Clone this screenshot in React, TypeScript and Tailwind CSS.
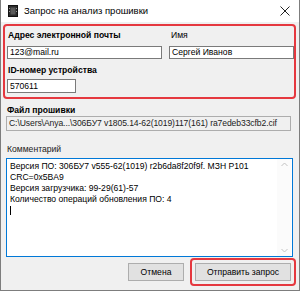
import React from 'react';

const lines = [
  'Версия ПО: 306БУ7 v555-62(1019) r2b6da8f20f9f. МЗН P101',
  'CRC=0x5BA9',
  'Версия загрузчика: 99-29(61)-57',
  'Количество операций обновления ПО: 4',
];

function TitleIcon() {
  return (
    <svg width="10" height="12" viewBox="0 0 10 12" className="shrink-0">
      <rect x="0.5" y="0.5" width="9" height="11" fill="#2b2b2b" stroke="#111" />
      <rect x="2.5" y="2.5" width="5" height="7" fill="#5a5a5a" />
      <rect x="1" y="3" width="1" height="1" fill="#9a9a9a" />
      <rect x="1" y="6" width="1" height="1" fill="#9a9a9a" />
      <rect x="8" y="3" width="1" height="1" fill="#9a9a9a" />
      <rect x="8" y="6" width="1" height="1" fill="#9a9a9a" />
    </svg>
  );
}

function Field({ value, className }: { value: string; className: string }) {
  return (
    <div className={`h-[13px] bg-white border border-[#7a7a7a] pl-[2px] leading-[11px] whitespace-nowrap overflow-hidden ${className}`}>
      {value}
    </div>
  );
}

export default function App() {
  return (
    <div className="w-[300px] h-[291px] bg-[#f0f0f0] border-x border-b border-[#7d7d7d] flex flex-col text-[8.6px] text-black font-['Segoe_UI','Liberation_Sans',sans-serif] overflow-hidden">
      {/* title bar */}
      <div className="h-[22px] bg-white flex items-center pl-[7px] pr-[9px] shrink-0">
        <TitleIcon />
        <span className="ml-[6px] text-[9.5px] flex-1">Запрос на анализ прошивки</span>
        <svg width="10" height="10" viewBox="0 0 10 10">
          <path d="M0.5 0.5 L9.5 9.5 M9.5 0.5 L0.5 9.5" stroke="#222" strokeWidth="1" />
        </svg>
      </div>

      {/* highlighted group */}
      <div className="mt-[2px] ml-[2px] mr-[3px] border-2 border-[#e5383f] rounded-[4px] pl-[2px] pr-[1px] pt-[4px] pb-[4px] flex gap-[7px]">
        <div className="flex flex-col w-[155px]">
          <div className="font-bold leading-[11px] pl-[1px]">Адрес электронной почты</div>
          <Field value="123@mail.ru" className="mt-[5px] w-[155px]" />
          <div className="font-bold leading-[11px] pl-[1px] mt-[6px]">ID-номер устройства</div>
          <Field value="570611" className="mt-[3px] w-[69px] h-[14px] leading-[12px]" />
        </div>
        <div className="flex flex-col flex-1">
          <div className="leading-[11px] pl-[2px]">Имя</div>
          <Field value="Сергей Иванов" className="mt-[5px] w-[125px]" />
        </div>
      </div>

      {/* firmware file */}
      <div className="ml-[5px] mt-[6px]">
        <div className="font-bold leading-[11px] pl-[1px]">Файл прошивки</div>
        <div className="w-[285px] h-[15px] border border-[#adadad] bg-[#f0f0f0] pl-[2px] leading-[13px] whitespace-nowrap overflow-hidden text-[#222] tracking-[-0.1px]">
          C:\Users\Anya...\306БУ7 v1805.14-62(1019)117(161) ra7edeb33cfb2.cif
        </div>
      </div>

      {/* comment */}
      <div className="ml-[5px] mt-[13px]">
        <div className="leading-[11px] pl-[1px] text-[#222]">Комментарий</div>
        <div className="mt-[3px] w-[287px] h-[99px] border border-[#0078d7] bg-white flex">
          <div className="flex-1 pl-[3px] pt-[2px] leading-[11px]">
            {lines.map((l) => (
              <div key={l} className="whitespace-nowrap">{l}</div>
            ))}
            <div className="h-[11px] flex items-center">
              <span className="w-px h-[9px] bg-black" />
            </div>
          </div>
          <div className="w-[14px] bg-[#fbfbfb] flex flex-col justify-between items-center py-[3px] mr-px">
            <svg width="7" height="5" viewBox="0 0 7 5">
              <path d="M0.5 4 L3.5 1 L6.5 4" stroke="#c2c2c2" fill="none" />
            </svg>
            <svg width="7" height="5" viewBox="0 0 7 5">
              <path d="M0.5 1 L3.5 4 L6.5 1" stroke="#c2c2c2" fill="none" />
            </svg>
          </div>
        </div>
      </div>

      {/* buttons */}
      <div className="flex justify-end items-center mt-px mr-[3px]">
        <div className="w-[56px] h-[18px] border border-[#adadad] bg-[#e1e1e1] flex items-center justify-center">
          Отмена
        </div>
        <div className="ml-[6px] border-2 border-[#e5383f] rounded-[4px] p-[3px]">
          <div className="w-[96px] h-[18px] border border-[#adadad] bg-[#e1e1e1] flex items-center justify-center">
            Отправить запрос
          </div>
        </div>
      </div>
    </div>
  );
}
